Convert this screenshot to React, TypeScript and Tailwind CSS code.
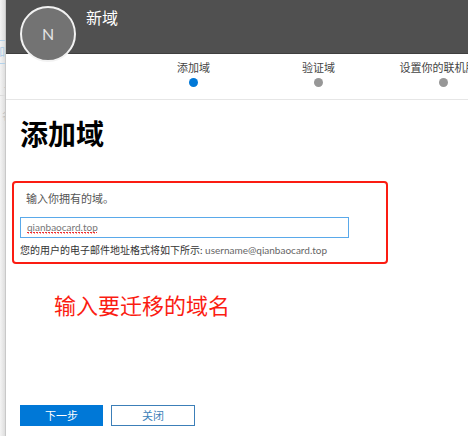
import { useState } from "react";
import { clsx } from "clsx";

const steps = [
  { label: "添加域", active: true },
  { label: "验证域", active: false },
  { label: "设置你的联机服务", active: false },
];

/** Sliver of the page that the panel slides over. */
function BackgroundPage() {
  return (
    <aside
      aria-hidden="true"
      className="flex w-1.5 shrink-0 flex-col overflow-hidden border-r border-[#c8c8c8] bg-linear-to-r from-[#f4f4f4] to-[#dedede] pt-10 text-[11px] leading-4 whitespace-nowrap text-[#bbb]"
    >
      <div className="flex h-6 items-center justify-end border-y border-[#b4d2ea] text-[#a9cbe6]">
        加
      </div>
      <div className="flex h-8 items-end border-b border-[#dcdcdc] pb-1">
        <span className="pl-1">显</span>
      </div>
      <span className="pt-3 pl-0.5">名</span>
    </aside>
  );
}

function Stepper() {
  return (
    <ol className="flex h-[46px] overflow-hidden border-b border-[#e6e6e6] pt-1.5 pl-[125px]">
      {steps.map((step) => (
        <li
          key={step.label}
          className="flex w-[125px] shrink-0 flex-col items-center gap-0.5 text-[11px] leading-4 whitespace-nowrap text-[#444]"
        >
          {step.label}
          <span
            className={clsx(
              "size-[9px] rounded-full",
              step.active ? "bg-[#0078d7]" : "bg-[#979797]",
            )}
          />
        </li>
      ))}
    </ol>
  );
}

/** Red zigzag that a spell checker puts under the typed word. */
function SpellingMark() {
  return (
    <svg
      aria-hidden="true"
      viewBox="0 0 70 2"
      className="pointer-events-none absolute bottom-1 left-[7px] h-0.5 w-[70px]"
    >
      <path d="M0 0.5H70" stroke="#f03030" strokeDasharray="2 1" />
      <path
        d="M1 1.5H70"
        stroke="#f03030"
        strokeOpacity="0.5"
        strokeDasharray="1 2"
      />
    </svg>
  );
}

export default function App() {
  const [domain, setDomain] = useState("qianbaocard.top");

  return (
    <div className="flex min-h-screen overflow-hidden bg-white font-['Lato','Noto_Sans_CJK_SC',sans-serif]">
      <BackgroundPage />
      <div className="flex min-w-0 flex-1 flex-col">
        <header className="flex h-[54px] items-start gap-2.5 border-b border-[#3f3f3f] bg-[#505050] pt-1.5 pl-3.5">
          <div className="relative flex size-14 shrink-0 items-center justify-center rounded-full border-2 border-[#f2f2f2] bg-[#737373] text-base text-[#e4e4e4]">
            N
          </div>
          <h2 className="text-base leading-6 text-white">新域</h2>
        </header>
        <Stepper />

        <main className="flex flex-1 flex-col pb-2.5 pl-3.5">
          <h1 className="mt-3.5 text-[28px] leading-10 font-bold text-black">
            添加域
          </h1>
          <section className="mt-[27px] -ml-2 mr-20 rounded-sm border-2 border-[#fb1c12] px-1.5 pt-2 pb-1">
            <label
              htmlFor="domain"
              className="block pl-1.5 text-[11px] leading-4 text-[#555]"
            >
              输入你拥有的域。
            </label>
            <div className="relative mt-2.5 w-[329px] max-w-full">
              <input
                id="domain"
                value={domain}
                spellCheck={false}
                onChange={(e) => setDomain(e.target.value)}
                className="block h-[21px] w-full border border-[#5aa9ea] px-1.5 pb-0.5 text-[10px] leading-4 text-[#777] outline-none"
              />
              <SpellingMark />
            </div>
            <p className="mt-1 text-[10px] leading-4 whitespace-nowrap text-[#333]">
              您的用户的电子邮件地址格式将如下所示:{" "}
              <span className="text-[#666]">username@{domain}</span>
            </p>
          </section>
          <p className="mt-[26px] ml-[34px] text-[22px] leading-8 text-[#fb1c12]">
            输入要迁移的域名
          </p>
          <div className="mt-auto flex gap-2">
            <button
              type="button"
              className="h-[21px] w-[83px] bg-[#0078d7] text-[11px] leading-4 text-white"
            >
              下一步
            </button>
            <button
              type="button"
              className="h-[21px] w-[84px] border border-[#3c7fb8] text-[11px] leading-4 text-[#3c7fb8]"
            >
              关闭
            </button>
          </div>
        </main>
      </div>
    </div>
  );
}
